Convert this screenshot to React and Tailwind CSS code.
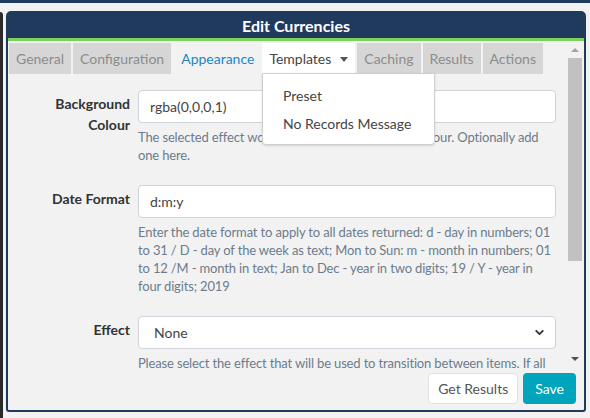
import { ChevronDown } from 'lucide-react';

const tabs = [
    { label: 'General', state: 'off' },
    { label: 'Configuration', state: 'off' },
    { label: 'Appearance', state: 'active' },
    { label: 'Templates', state: 'open' },
    { label: 'Caching', state: 'off' },
    { label: 'Results', state: 'off' },
    { label: 'Actions', state: 'off' },
];

function Tab({ label, state }) {
    if (state === 'active') {
        return <div className="flex h-full items-center pl-[8px] pr-[6px] text-[#1b87c5]">{label}</div>;
    }
    if (state === 'open') {
        return (
            <div className="flex h-full items-center gap-[9px] bg-white px-[7px] text-[#444]">
                {label}
                <span className="mt-px h-0 w-0 border-x-[4px] border-t-[5px] border-x-transparent border-t-[#555]" />
            </div>
        );
    }
    return <div className="flex h-full items-center bg-[#d6d6d6] px-[7px] text-[#8c8c8c]">{label}</div>;
}

function Row({ label, children, help }) {
    return (
        <div className="flex gap-[8px]">
            <div className="w-[122px] shrink-0 pt-[3px] text-right font-bold leading-[21px] text-[#333]">{label}</div>
            <div className="flex-1">
                {children}
                <p className="mt-[5px] text-[13px] leading-[18px] tracking-[-0.15px] text-[#6c7c8c]">{help}</p>
            </div>
        </div>
    );
}

function Scrollbar() {
    return (
        <div className="flex w-[14px] shrink-0 flex-col items-center">
            <div className="flex h-[17px] items-center">
                <span className="h-0 w-0 border-x-[4px] border-b-[4px] border-x-transparent border-b-[#a3a3a3]" />
            </div>
            <div className="h-[203px] w-full bg-[#c1c1c1]" />
            <div className="flex-1" />
            <div className="flex h-[17px] items-center pb-[2px]">
                <span className="h-0 w-0 border-x-[4px] border-t-[4px] border-x-transparent border-t-[#505050]" />
            </div>
        </div>
    );
}

export default function App() {
    return (
        <div className="flex h-[418px] w-[590px] flex-col overflow-hidden bg-[#f2f2f2] font-['Lato','Liberation_Sans',sans-serif] text-[14px]">
            <div className="h-[3px] shrink-0 bg-[#203a5e]" />

            <div className="flex flex-1 pt-[8px]">
                <div className="mt-[1px] w-[3px] shrink-0 rounded-tr-[3px] bg-[#2a2a2a]" />

                <div className="ml-[3px] flex h-[401px] w-[580px] flex-col rounded-t-[5px] rounded-b-[3px] border-2 border-[#203a5e]">
                    <div className="flex h-[25px] shrink-0 items-center justify-center bg-[#203a5e] text-[16px] font-bold text-white">
                        Edit Currencies
                    </div>
                    <div className="h-[3px] shrink-0 bg-[#7cd35c]" />

                    <div className="relative flex h-[327px] shrink-0">
                        <div className="flex min-w-0 flex-1 flex-col">
                            <div className="flex h-[33px] shrink-0 gap-[2px] pl-px pt-[2px]">
                                {tabs.map((t) => (
                                    <Tab key={t.label} {...t} />
                                ))}
                            </div>

                            <div className="flex flex-col gap-[21px] overflow-hidden pr-[12px] pt-[16px]">
                                <Row
                                    label={<>Background<br />Colour</>}
                                    help="The selected effect works best with a background colour. Optionally add one here."
                                >
                                    <div className="flex h-[33px] items-center rounded-[4px] border border-[#ced4da] bg-white px-[11px] text-[#444]">
                                        rgba(0,0,0,1)
                                    </div>
                                </Row>
                                <Row
                                    label="Date Format"
                                    help="Enter the date format to apply to all dates returned: d - day in numbers; 01 to 31 / D - day of the week as text; Mon to Sun: m - month in numbers; 01 to 12 /M - month in text; Jan to Dec - year in two digits; 19 / Y - year in four digits; 2019"
                                >
                                    <div className="flex h-[33px] items-center rounded-[4px] border border-[#ced4da] bg-white px-[11px] text-[#444]">
                                        d:m:y
                                    </div>
                                </Row>
                                <Row
                                    label="Effect"
                                    help="Please select the effect that will be used to transition between items. If all"
                                >
                                    <div className="flex h-[33px] items-center justify-between rounded-[4px] border border-[#ced4da] bg-white pl-[15px] pr-[9px] text-[#444]">
                                        None
                                        <ChevronDown size={13} strokeWidth={3.5} className="text-[#333]" />
                                    </div>
                                </Row>
                            </div>
                        </div>

                        <Scrollbar />
                        <div className="w-[2px] shrink-0" />

                        <div className="absolute left-[254px] top-[32px] w-[173px] rounded-b-[4px] border border-[#cfcfcf] bg-white pb-[6px] pt-[8px] text-[#444] shadow-sm">
                            <div className="px-[20px] py-[4px] leading-[20px]">Preset</div>
                            <div className="px-[20px] py-[4px] leading-[20px]">No Records Message</div>
                        </div>
                    </div>

                    <div className="flex flex-1 items-start justify-end gap-[5px] pr-[8px] pt-[5px]">
                        <button className="h-[31px] rounded-[4px] border border-[#e2e2e2] bg-white px-[9px] text-[#555]">
                            Get Results
                        </button>
                        <button className="h-[31px] rounded-[4px] bg-[#00a5bb] px-[12px] text-white">Save</button>
                    </div>
                </div>
            </div>
        </div>
    );
}
